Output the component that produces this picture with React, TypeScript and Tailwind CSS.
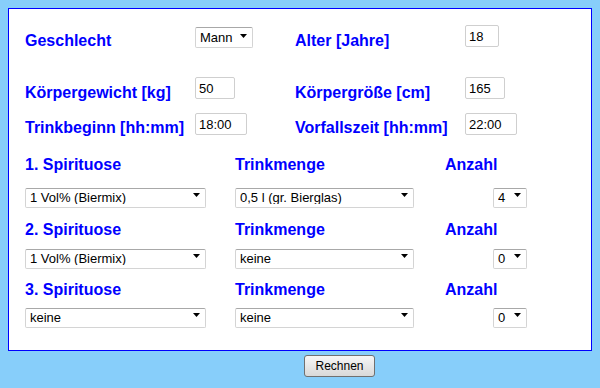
import type { ReactNode } from 'react'

const labelCls = "text-[16px] font-bold leading-[18px] text-[#0000ff] whitespace-nowrap"

const Arrow = () => (
  <svg width="7" height="4" viewBox="0 0 7 4" className="pointer-events-none absolute right-[6px] top-1/2 -translate-y-1/2">
    <path d="M0 0H7L3.5 4Z" fill="#000" />
  </svg>
)

const Select = ({ value, options, className }: { value: string; options: string[]; className: string }) => (
  <div className={`relative ${className}`}>
    <select
      defaultValue={value}
      className="h-full w-full appearance-none rounded-[2px] border border-[#d4d4d4] border-t-[#a8a8a8] bg-white pl-[4px] text-[13px] leading-none text-black outline-none"
    >
      {options.map((o) => (
        <option key={o}>{o}</option>
      ))}
    </select>
    <Arrow />
  </div>
)

const Input = ({ value, className }: { value: string; className: string }) => (
  <input
    defaultValue={value}
    className={`h-[22px] rounded-[2px] border border-[#cfcfcf] bg-white pl-[3px] text-[13px] text-black outline-none ${className}`}
  />
)

const Field = ({ label, mt, children }: { label: string; mt: string; children: ReactNode }) => (
  <div className="flex w-[270px] items-start">
    <span className={`w-[170px] ${mt} ${labelCls}`}>{label}</span>
    {children}
  </div>
)

const spirits = ['keine', '1 Vol% (Biermix)', '5 Vol% (Bier)', '12 Vol% (Wein)', '40 Vol% (Schnaps)']
const mengen = ['keine', '0,2 l (kl. Bierglas)', '0,5 l (gr. Bierglas)', '0,1 l (Weinglas)', '2 cl (Schnapsglas)']
const anzahl = ['0', '1', '2', '3', '4', '5', '6', '7', '8', '9']

const SpiritRow = ({ n, mt, selMt, s, m, a }: { n: number; mt: string; selMt: string; s: string; m: string; a: string }) => (
  <>
    <div className={`flex ${mt}`}>
      <span className={`w-[210px] ${labelCls}`}>{n}. Spirituose</span>
      <span className={`w-[210px] ${labelCls}`}>Trinkmenge</span>
      <span className={labelCls}>Anzahl</span>
    </div>
    <div className={`flex ${selMt}`}>
      <div className="w-[210px]">
        <Select value={s} options={spirits} className="h-[20px] w-[181px]" />
      </div>
      <div className="w-[210px]">
        <Select value={m} options={mengen} className="h-[20px] w-[179px]" />
      </div>
      <div className="pl-[48px]">
        <Select value={a} options={anzahl} className="h-[20px] w-[34px]" />
      </div>
    </div>
  </>
)

export default function App() {
  return (
    <div className="min-h-screen bg-[#87cefa] pt-2 font-['Liberation_Sans',Arial,sans-serif]">
      <div className="mx-2 h-[343px] border border-[#0000ff] bg-white pl-4 pt-4">
        <div className="flex">
          <Field label="Geschlecht" mt="mt-[7px]">
            <Select value="Mann" options={['Mann', 'Frau']} className="h-[21px] w-[58px]" />
          </Field>
          <Field label="Alter [Jahre]" mt="mt-[7px]">
            <Input value="18" className="w-[34px]" />
          </Field>
        </div>
        <div className="mt-[27px] flex">
          <Field label="Körpergewicht [kg]" mt="mt-[7px]">
            <Input value="50" className="w-[40px]" />
          </Field>
          <Field label="Körpergröße [cm]" mt="mt-[7px]">
            <Input value="165" className="w-[40px]" />
          </Field>
        </div>
        <div className="mt-[11px] flex">
          <Field label="Trinkbeginn [hh:mm]" mt="mt-[6px]">
            <Input value="18:00" className="w-[52px]" />
          </Field>
          <Field label="Vorfallszeit [hh:mm]" mt="mt-[6px]">
            <Input value="22:00" className="w-[52px]" />
          </Field>
        </div>

        <SpiritRow n={1} mt="mt-[19px]" selMt="mt-[11px]" s="1 Vol% (Biermix)" m="0,5 l (gr. Bierglas)" a="4" />
        <SpiritRow n={2} mt="mt-[16px]" selMt="mt-[7px]" s="1 Vol% (Biermix)" m="keine" a="0" />
        <SpiritRow n={3} mt="mt-[15px]" selMt="mt-[6px]" s="keine" m="keine" a="0" />
      </div>
      <div className="mt-[2px] pl-[304px]">
        <button className="h-[22px] w-[71px] rounded-[3px] border border-[#707070] bg-gradient-to-b from-[#f6f6f6] to-[#d9d9d9] text-[12px] text-black">
          Rechnen
        </button>
      </div>
    </div>
  )
}
